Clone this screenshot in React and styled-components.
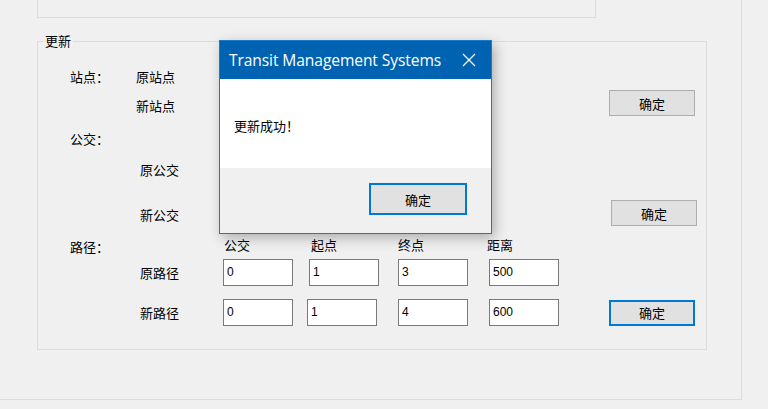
import React from 'react'
import styled, { createGlobalStyle } from 'styled-components'

const Global = createGlobalStyle`
  html, body {
    margin: 0;
    padding: 0;
    background: #f0f0f0;
    overflow: hidden;
  }
  * { box-sizing: border-box; }
`

const cjk = `"Noto Sans CJK SC", "Noto Sans", sans-serif`

const Window = styled.div`
  position: relative;
  width: 742px;
  height: 400px;
  border-right: 1px solid #dcdcdc;
  border-bottom: 1px solid #dcdcdc;
  font-family: ${cjk};
  font-size: 13px;
  color: #000;
`

const TopGroup = styled.div`
  margin-left: 37px;
  width: 559px;
  height: 18px;
  border: 1px solid #dcdcdc;
  border-top: none;
`

const Group = styled.fieldset`
  margin: 23px 0 0 37px;
  padding: 0;
  width: 670px;
  height: 309px;
  border: 1px solid #dcdcdc;
  display: flex;
  flex-direction: column;
  position: relative;
`

const Legend = styled.legend`
  position: absolute;
  top: -10px;
  left: 5px;
  padding: 0 2px 0 2px;
  background: #f0f0f0;
  font-size: 13px;
  line-height: 18px;
`

const Row = styled.div`
  display: flex;
  align-items: center;
  height: ${p => p.$h || 18}px;
  margin-top: ${p => p.$top || 0}px;
  padding-left: 32px;
  line-height: 18px;
`

const Label = styled.span`
  flex: none;
  width: ${p => p.$w || 66}px;
  margin-top: ${p => p.$dy || 0}px;
  white-space: nowrap;
`

const Head = styled.span`
  flex: none;
  width: ${p => p.$w}px;
`

const Spacer = styled.div`
  flex: 1;
`

const Button = styled.button`
  flex: none;
  width: ${p => p.$w || 86}px;
  height: ${p => p.$h || 26}px;
  margin-right: ${p => p.$right || 0}px;
  padding: 0;
  background: #e1e1e1;
  border: ${p => (p.$focus ? '2px solid #0078d7' : '1px solid #adadad')};
  font-family: ${cjk};
  font-size: 13px;
  color: #000;
`

const Field = styled.div`
  flex: none;
  width: 70px;
  height: 27px;
  margin-left: ${p => p.$left || 0}px;
  border: 1px solid #7a7a7a;
  background: #fff;
  padding: 4px 0 0 3px;
  font-family: "Liberation Sans", Arial, sans-serif;
  font-size: 12px;
  line-height: 16px;
`

const Dialog = styled.div`
  position: absolute;
  left: 219px;
  top: 40px;
  width: 273px;
  height: 194px;
  border: 1px solid #1979ca;
  background: #f0f0f0;
  display: flex;
  flex-direction: column;
  box-shadow: 3px 4px 12px rgba(0, 0, 0, 0.28);
`

const TitleBar = styled.div`
  height: 38px;
  background: #0063b1;
  color: #fff;
  display: flex;
  align-items: center;
  padding-left: 9px;
  font-family: "Open Sans", "Noto Sans", sans-serif;
  font-size: 15.6px;
  letter-spacing: -0.1px;
`

const Title = styled.span`
  flex: 1;
`

const Close = styled.svg`
  width: 14px;
  height: 14px;
  margin-right: 15px;
`

const Content = styled.div`
  height: 89px;
  background: #fff;
  padding: 38px 0 0 14px;
  font-size: 13px;
  line-height: 18px;
`

const Footer = styled.div`
  flex: 1;
  display: flex;
  justify-content: flex-end;
  align-items: flex-start;
  padding: 15px 24px 0 0;
`

export default function App() {
  return (
    <Window>
      <Global />
      <TopGroup />
      <Group>
        <Legend>更新</Legend>

        <Row $top={26}>
          <Label>站点：</Label>
          <Label>原站点</Label>
        </Row>
        <Row $top={4} $h={26}>
          <Label />
          <Label $dy={6}>新站点</Label>
          <Spacer />
          <Button $right={11}>确定</Button>
        </Row>

        <Row $top={14}>
          <Label>公交：</Label>
        </Row>
        <Row $top={13}>
          <Label $w={70} />
          <Label>原公交</Label>
        </Row>
        <Row $top={21} $h={26}>
          <Label $w={70} />
          <Label $dy={4}>新公交</Label>
          <Spacer />
          <Button $right={9}>确定</Button>
        </Row>

        <Row $top={10}>
          <Label $w={154} $dy={3}>路径：</Label>
          <Head $w={87}>公交</Head>
          <Head $w={87}>起点</Head>
          <Head $w={89}>终点</Head>
          <Head $w={60}>距离</Head>
        </Row>
        <Row $top={5} $h={27}>
          <Label $w={70} />
          <Label $w={83}>原路径</Label>
          <Field>0</Field>
          <Field $left={16}>1</Field>
          <Field $left={19}>3</Field>
          <Field $left={21}>500</Field>
        </Row>
        <Row $top={13} $h={27}>
          <Label $w={70} />
          <Label $w={83}>新路径</Label>
          <Field>0</Field>
          <Field $left={14}>1</Field>
          <Field $left={21}>4</Field>
          <Field $left={21}>600</Field>
          <Spacer />
          <Button $focus $right={11}>确定</Button>
        </Row>
      </Group>

      <Dialog>
        <TitleBar>
          <Title>Transit Management Systems</Title>
          <Close viewBox="0 0 14 14">
            <path d="M1 1 L13 13 M13 1 L1 13" stroke="#fff" strokeWidth="1.2" fill="none" />
          </Close>
        </TitleBar>
        <Content>更新成功！</Content>
        <Footer>
          <Button $focus $w={98} $h={32}>确定</Button>
        </Footer>
      </Dialog>
    </Window>
  )
}
